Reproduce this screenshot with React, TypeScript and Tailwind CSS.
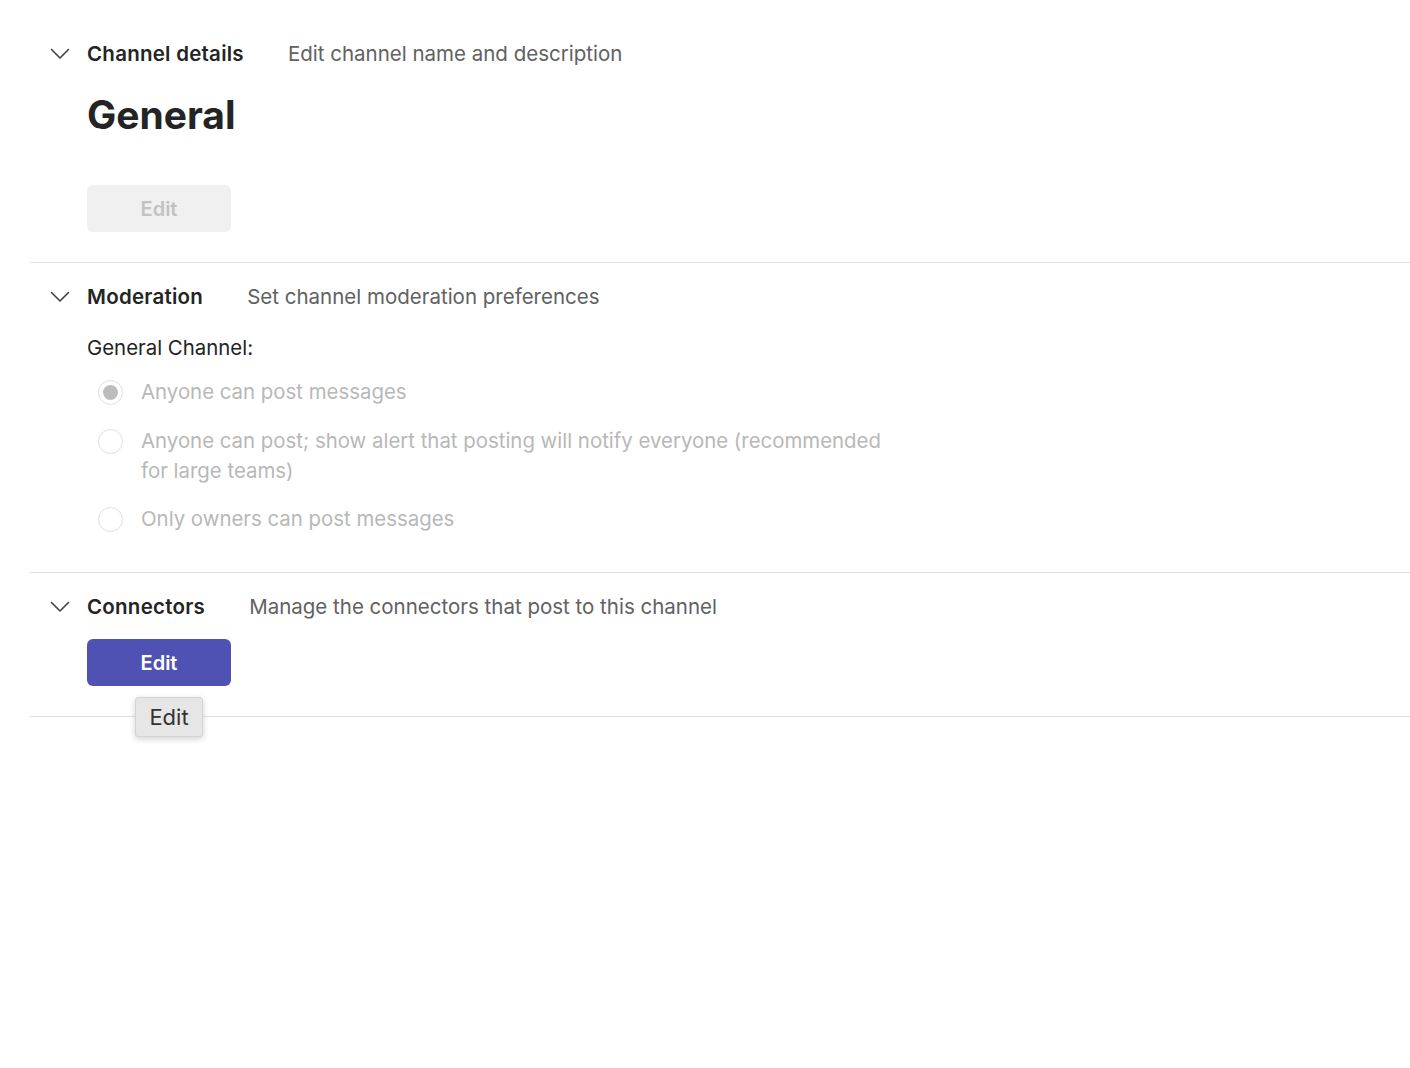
import React from 'react';

function Chevron() {
  return (
    <svg width="20" height="12" viewBox="0 0 20 12" fill="none" className="shrink-0">
      <path d="M1.5 1.5 L10 10 L18.5 1.5" stroke="#424242" strokeWidth="1.6" strokeLinecap="round" strokeLinejoin="round" />
    </svg>
  );
}

function SectionHeader({ title, desc }: { title: string; desc: string }) {
  return (
    <div className="flex h-7 items-center">
      <Chevron />
      <span className="ml-[17px] text-[20.5px] font-semibold tracking-[0.012em] text-[#242424]">{title}</span>
      <span className="ml-[44px] text-[20.5px] text-[#616161]">{desc}</span>
    </div>
  );
}

function Radio({ checked, label, className }: { checked?: boolean; label: string; className?: string }) {
  return (
    <div className={`flex ${className ?? ''}`}>
      <div className="flex h-[30px] w-[54px] shrink-0 items-center pl-[11px]">
        <div className="flex h-[25px] w-[25px] items-center justify-center rounded-full border border-[#e0e0e0] bg-white">
          {checked && <div className="h-[15px] w-[15px] rounded-full bg-[#bdbdbd]" />}
        </div>
      </div>
      <span className="max-w-[750px] text-[20.4px] leading-[30px] text-[#b8b8b8]">{label}</span>
    </div>
  );
}

export default function App() {
  return (
    <div
      className="min-h-[1068px] bg-white pl-[30px]"
      style={{ fontFamily: 'Inter, "Noto Sans", sans-serif' }}
    >
      <section className="border-b border-[#e0e0e0] pb-[30px] pl-[20px] pt-[40px]">
        <SectionHeader title="Channel details" desc="Edit channel name and description" />
        <div className="ml-[37px]">
          <h1 className="mt-[23px] text-[39px] font-bold leading-[48px] text-[#242424]">General</h1>
          <button
            disabled
            className="mt-[46px] h-[47px] w-[144px] rounded-[6px] bg-[#f0f0f0] text-[20px] font-semibold text-[#c2c2c2]"
          >
            Edit
          </button>
        </div>
      </section>

      <section className="border-b border-[#e0e0e0] pb-[38px] pl-[20px] pt-[20px]">
        <SectionHeader title="Moderation" desc="Set channel moderation preferences" />
        <div className="ml-[37px]">
          <div className="mt-[23px] text-[20.4px] leading-[28px] text-[#242424]">General Channel:</div>
          <Radio className="mt-[15px]" checked label="Anyone can post messages" />
          <Radio
            className="mt-[19px]"
            label="Anyone can post; show alert that posting will notify everyone (recommended for large teams)"
          />
          <Radio className="mt-[18px]" label="Only owners can post messages" />
        </div>
      </section>

      <section className="border-b border-[#e0e0e0] pb-[30px] pl-[20px] pt-[20px]">
        <SectionHeader title="Connectors" desc="Manage the connectors that post to this channel" />
        <div className="relative ml-[37px] mt-[18px] w-[144px]">
          <button className="h-[47px] w-[144px] rounded-[6px] bg-[#4f52b2] text-[20px] font-semibold text-white">
            Edit
          </button>
          <div className="absolute left-[48px] top-[58px] z-10 flex h-[40px] w-[68px] items-center justify-center rounded-[3px] border border-[#d4d4d4] bg-[#e6e6e6] text-[22px] text-[#333333] shadow-[0_2px_6px_rgba(0,0,0,0.18)]">
            Edit
          </div>
        </div>
      </section>
    </div>
  );
}
